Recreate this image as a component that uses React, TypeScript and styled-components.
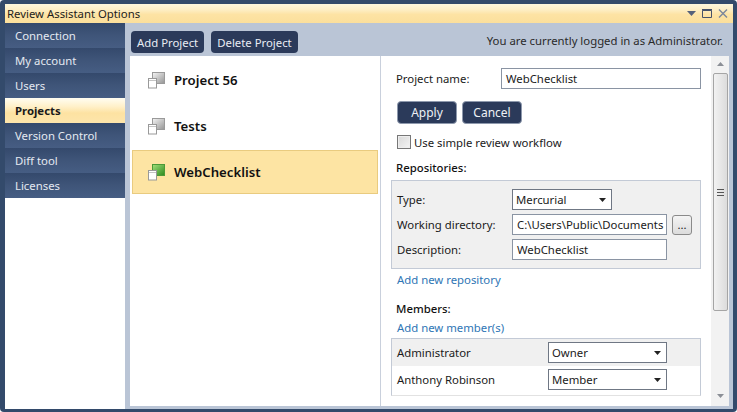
import React from "react";
import styled, { createGlobalStyle } from "styled-components";

const GlobalStyle = createGlobalStyle`
  html, body { margin: 0; padding: 0; background: #fff; }
  body { font-family: "Noto Sans", "Open Sans", sans-serif; font-size: 11.35px; color: #1b1b1b; }
  * { box-sizing: border-box; }
`;

const navItems = ["Connection", "My account", "Users", "Projects", "Version Control", "Diff tool", "Licenses"];
const projects = ["Project 56", "Tests", "WebChecklist"];

function ProjectIcon({ active, id }: { active: boolean; id: string }) {
  return (
    <svg width="17" height="17" viewBox="0 0 17 17">
      <defs>
        <linearGradient id={id} x1="0" y1="0" x2="1" y2="1">
          <stop offset="0" stopColor={active ? "#a5e07c" : "#f6f6f6"} />
          <stop offset="1" stopColor={active ? "#2c8a1e" : "#949494"} />
        </linearGradient>
      </defs>
      <rect x="4.5" y="0.5" width="12" height="11" fill={`url(#${id})`} stroke={active ? "#4c9a38" : "#9a9a9a"} />
      <rect x="0.5" y="6.5" width="8" height="9.5" fill="#fff" stroke="#999" />
      <line x1="1" y1="8.5" x2="8" y2="8.5" stroke="#c4c4c4" />
    </svg>
  );
}

function Caret() {
  return (
    <svg width="7" height="4" viewBox="0 0 7 4">
      <path d="M0 0h7L3.5 4z" fill="#222" />
    </svg>
  );
}

export default function App() {
  return (
    <>
      <GlobalStyle />
      <Window>
        <TitleBar>
          <TitleText>Review Assistant Options</TitleText>
          <WindowControls>
            <svg width="9" height="5" viewBox="0 0 9 5"><path d="M0 0h9L4.5 5z" fill="#55617a" /></svg>
            <svg width="10" height="9" viewBox="0 0 10 9"><path d="M.5 1.5h9v7h-9z" fill="none" stroke="#46526b" /><path d="M0 .75h10" stroke="#46526b" strokeWidth="1.5" /></svg>
            <svg width="10" height="9" viewBox="0 0 10 9"><path d="M1 .5l8 8M9 .5l-8 8" stroke="#7b869b" strokeWidth="1.4" /></svg>
          </WindowControls>
        </TitleBar>
        <Body>
          <Sidebar>
            {navItems.map((item) => (
              <NavItem key={item} $active={item === "Projects"}>{item}</NavItem>
            ))}
          </Sidebar>
          <Main>
            <Toolbar>
              <DarkButton>Add Project</DarkButton>
              <DarkButton>Delete Project</DarkButton>
              <LoginNote>You are currently logged in as Administrator.</LoginNote>
            </Toolbar>
            <Content>
              <ProjectList>
                {projects.map((p, i) => (
                  <ProjectRow key={p} $active={p === "WebChecklist"}>
                    <ProjectIcon active={p === "WebChecklist"} id={`project-icon-${i}`} />
                    <ProjectName>{p}</ProjectName>
                  </ProjectRow>
                ))}
              </ProjectList>
              <Details>
                <Form>
                  <NameRow>
                    <NameLabel>Project name:</NameLabel>
                    <TextBox $width={200}>WebChecklist</TextBox>
                  </NameRow>
                  <ActionRow>
                    <ActionButton>Apply</ActionButton>
                    <ActionButton>Cancel</ActionButton>
                  </ActionRow>
                  <CheckRow>
                    <CheckBox />
                    <span>Use simple review workflow</span>
                  </CheckRow>
                  <SectionTitle>Repositories:</SectionTitle>
                  <RepoBox>
                    <RepoRow>
                      <RepoLabel>Type:</RepoLabel>
                      <SelectBox $width={100}>Mercurial<Caret /></SelectBox>
                    </RepoRow>
                    <RepoRow>
                      <RepoLabel>Working directory:</RepoLabel>
                      <TextBox $width={155}>C:\Users\Public\Documents</TextBox>
                      <BrowseButton>...</BrowseButton>
                    </RepoRow>
                    <RepoRow>
                      <RepoLabel>Description:</RepoLabel>
                      <TextBox $width={155}>WebChecklist</TextBox>
                    </RepoRow>
                  </RepoBox>
                  <RepoLink>Add new repository</RepoLink>
                  <MembersTitle>Members:</MembersTitle>
                  <MemberLink>Add new member(s)</MemberLink>
                  <MemberTable>
                    <MemberRow $shaded>
                      <span>Administrator</span>
                      <SelectBox $width={119}>Owner<Caret /></SelectBox>
                    </MemberRow>
                    <MemberRow>
                      <span>Anthony Robinson</span>
                      <SelectBox $width={119}>Member<Caret /></SelectBox>
                    </MemberRow>
                  </MemberTable>
                </Form>
                <ScrollBar>
                  <svg width="7" height="4" viewBox="0 0 7 4"><path d="M0 4h7L3.5 0z" fill="#8b8f96" /></svg>
                  <ScrollThumb>
                    <svg width="7" height="7" viewBox="0 0 7 7"><path d="M0 .5h7M0 3.5h7M0 6.5h7" stroke="#555" /></svg>
                  </ScrollThumb>
                  <ScrollSpacer />
                  <svg width="7" height="4" viewBox="0 0 7 4"><path d="M0 0h7L3.5 4z" fill="#8b8f96" /></svg>
                </ScrollBar>
              </Details>
            </Content>
          </Main>
        </Body>
      </Window>
    </>
  );
}

const Window = styled.div`
  width: 737px;
  height: 412px;
  padding: 4px 4px 3px 5px;
  background: #334a6b;
  border-radius: 4px;
  display: flex;
  flex-direction: column;
  overflow: hidden;
`;

const TitleBar = styled.div`
  height: 19px;
  flex: none;
  padding: 0 5px 0 2px;
  display: flex;
  align-items: center;
  justify-content: space-between;
  background: linear-gradient(#fdf6dd 0%, #fdeec5 30%, #fde3a4 55%, #fbdf9c 100%);
`;

const TitleText = styled.div`
  color: #1d1d1d;
`;

const WindowControls = styled.div`
  display: flex;
  align-items: center;
  gap: 6px;
`;

const Body = styled.div`
  flex: 1;
  display: flex;
  min-height: 0;
`;

const Sidebar = styled.div`
  width: 120px;
  flex: none;
  background: #fff;
`;

const NavItem = styled.div<{ $active?: boolean }>`
  height: 25px;
  padding: 0 0 1px 10px;
  display: flex;
  align-items: center;
  color: ${(p) => (p.$active ? "#1a1a1a" : "#e4e9f1")};
  font-weight: ${(p) => (p.$active ? 700 : 400)};
  background: ${(p) =>
    p.$active
      ? "linear-gradient(#fffdf2 0%, #fff0c8 35%, #fde2a2 60%, #fde5ab 100%)"
      : "linear-gradient(#34496c 0%, #3f5579 50%, #465d83 100%)"};
`;

const Main = styled.div`
  flex: 1;
  min-width: 0;
  display: flex;
  flex-direction: column;
  background: #bac5d6;
  padding: 0 0 3px 5px;
`;

const Toolbar = styled.div`
  height: 33px;
  flex: none;
  padding: 8px 10px 4px 1px;
  display: flex;
  align-items: flex-start;
  gap: 7px;
`;

const DarkButton = styled.div`
  height: 22px;
  padding: 0 6px;
  display: flex;
  align-items: center;
  color: #e8ecf3;
  background: #2b3a5a;
  border-radius: 4px;
`;

const LoginNote = styled.div`
  margin-left: auto;
  line-height: 20px;
  color: #2a2a2a;
`;

const Content = styled.div`
  flex: 1;
  min-height: 0;
  margin-right: 4px;
  display: flex;
  background: #fff;
`;

const ProjectList = styled.div`
  width: 251px;
  flex: none;
  padding: 2px 2px 0;
  border-right: 1px solid #c9d0dc;
`;

const ProjectRow = styled.div<{ $active?: boolean }>`
  height: 44px;
  margin-bottom: 2px;
  padding-left: 15px;
  display: flex;
  align-items: center;
  gap: 9px;
  background: ${(p) => (p.$active ? "#fde4a3" : "transparent")};
  border: 1px solid ${(p) => (p.$active ? "#e9cb7f" : "transparent")};
`;

const ProjectName = styled.div`
  font-size: 13.2px;
  font-weight: 600;
  line-height: 16px;
  color: #111;
`;

const Details = styled.div`
  flex: 1;
  min-width: 0;
  display: flex;
  overflow: hidden;
`;

const Form = styled.div`
  width: 330px;
  flex: none;
  padding: 12px 0 0 10px;
  overflow: hidden;
  height: 350px;
`;

const NameRow = styled.div`
  display: flex;
  align-items: center;
  padding-left: 5px;
`;

const NameLabel = styled.div`
  width: 105px;
`;

const TextBox = styled.div<{ $width: number }>`
  width: ${(p) => p.$width}px;
  height: 21px;
  flex: none;
  padding: 0 4px;
  display: flex;
  align-items: center;
  background: #fff;
  border: 1px solid #8a94a3;
  overflow: hidden;
  white-space: nowrap;
`;

const ActionRow = styled.div`
  display: flex;
  gap: 5px;
  margin: 12px 0 0 6px;
`;

const ActionButton = styled.div`
  width: 60px;
  height: 23px;
  display: flex;
  align-items: center;
  justify-content: center;
  font-size: 12px;
  color: #eef1f6;
  background: #2b3a5a;
  border: 1px solid #8e99ad;
  border-radius: 4px;
`;

const CheckRow = styled.div`
  display: flex;
  align-items: center;
  gap: 3px;
  margin: 10px 0 0 6px;
  height: 16px;
`;

const CheckBox = styled.div`
  width: 14px;
  height: 14px;
  background: linear-gradient(135deg, #d8d8d8, #f4f4f4);
  border: 1px solid #777;
  box-shadow: inset 0 0 0 1px #eee;
`;

const SectionTitle = styled.div`
  margin: 9px 0 0 5px;
  height: 18px;
  line-height: 18px;
  font-weight: 500;
  color: #111;
`;

const RepoBox = styled.div`
  width: 310px;
  height: 89px;
  margin-top: 3px;
  padding: 8px 0 0 5px;
  background: #f0f0f0;
  border: 1px solid #c3cad6;
  display: flex;
  flex-direction: column;
  gap: 4px;
`;

const RepoRow = styled.div`
  display: flex;
  align-items: center;
`;

const RepoLabel = styled.div`
  width: 115px;
  flex: none;
`;

const SelectBox = styled.div<{ $width: number }>`
  width: ${(p) => p.$width}px;
  height: 21px;
  padding: 0 5px 0 3px;
  display: flex;
  align-items: center;
  justify-content: space-between;
  background: #fff;
  border: 1px solid #6f7784;
`;

const BrowseButton = styled.div`
  width: 20px;
  height: 20px;
  margin-left: 5px;
  display: flex;
  align-items: center;
  justify-content: center;
  line-height: 12px;
  background: linear-gradient(#f4f4f4, #dcdcdc);
  border: 1px solid #8a8a8a;
  border-radius: 3px;
`;

const LinkText = styled.div`
  padding-left: 6px;
  color: #2f76b5;
  line-height: 18px;
`;

const RepoLink = styled(LinkText)`
  margin-top: 2px;
`;

const MembersTitle = styled(SectionTitle)`
  margin-top: 11px;
`;

const MemberLink = styled(LinkText)`
  margin-top: 1px;
`;

const MemberTable = styled.div`
  width: 310px;
  height: 58px;
  margin-top: 1px;
  border: 1px solid #c3cad6;
  border-bottom: 1px solid #e2e2e2;
  overflow: hidden;
`;

const MemberRow = styled.div<{ $shaded?: boolean }>`
  height: 27px;
  padding-left: 5px;
  display: grid;
  grid-template-columns: 151px 119px;
  align-items: center;
  background: ${(p) => (p.$shaded ? "#f0f0f0" : "#fff")};
`;

const ScrollBar = styled.div`
  width: 18px;
  flex: none;
  display: flex;
  flex-direction: column;
  align-items: center;
  padding: 6px 0 8px;
  background: #f2f2f2;
`;

const ScrollThumb = styled.div`
  width: 15px;
  height: 238px;
  margin-top: 7px;
  display: flex;
  align-items: center;
  justify-content: center;
  background: linear-gradient(90deg, #f2f2f2, #dcdcdc);
  border: 1px solid #a5a5a5;
  border-radius: 2px;
`;

const ScrollSpacer = styled.div`
  flex: 1;
`;
